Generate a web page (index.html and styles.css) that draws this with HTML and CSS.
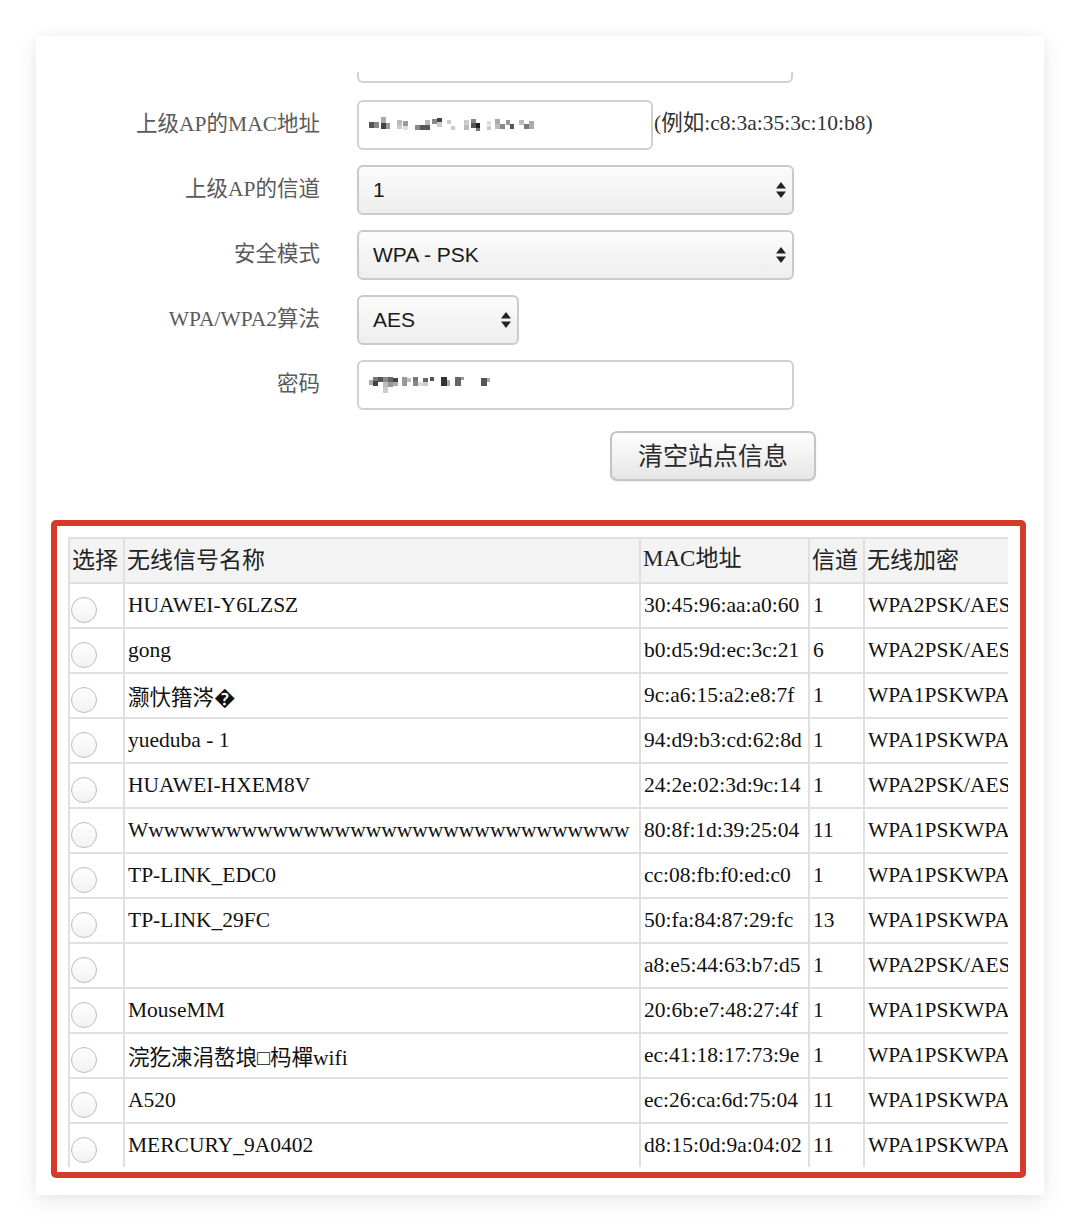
FILE: index.html
```html
<!DOCTYPE html>
<html lang="zh-CN">
<head>
<meta charset="utf-8">
<title>无线中继设置</title>
<link rel="stylesheet" href="styles.css">
</head>
<body>
<div class="card">
  <div class="viewport">
    <div class="prev-tail"></div>
    <div class="form">
      <div class="row">
        <label class="lbl">上级AP的MAC地址</label>
        <div class="field">
          <div class="input w-mac">
            <svg class="mosaic" width="176" height="16" viewBox="0 0 176 16">
              <rect x="0" y="5" width="5" height="6" fill="#555"/>
              <rect x="5" y="5" width="5" height="6" fill="#888"/>
              <rect x="12" y="0" width="5" height="6" fill="#aaa"/>
              <rect x="12" y="6" width="5" height="6" fill="#444"/>
              <rect x="17" y="6" width="4" height="6" fill="#999"/>
              <rect x="28" y="3" width="5" height="5" fill="#bbb"/>
              <rect x="28" y="8" width="5" height="4" fill="#ccc"/>
              <rect x="34" y="4" width="5" height="5" fill="#999"/>
              <rect x="34" y="9" width="5" height="4" fill="#ddd"/>
              <rect x="46" y="8" width="5" height="5" fill="#888"/>
              <rect x="51" y="8" width="5" height="5" fill="#555"/>
              <rect x="56" y="3" width="5" height="5" fill="#bbb"/>
              <rect x="56" y="8" width="5" height="5" fill="#555"/>
              <rect x="63" y="2" width="5" height="5" fill="#888"/>
              <rect x="68" y="1" width="5" height="4" fill="#444"/>
              <rect x="68" y="5" width="5" height="5" fill="#ccc"/>
              <rect x="78" y="3" width="4" height="4" fill="#ccc"/>
              <rect x="82" y="9" width="4" height="4" fill="#ccc"/>
              <rect x="95" y="3" width="5" height="5" fill="#ccc"/>
              <rect x="95" y="8" width="5" height="5" fill="#bbb"/>
              <rect x="102" y="2" width="5" height="4" fill="#888"/>
              <rect x="102" y="6" width="5" height="5" fill="#555"/>
              <rect x="107" y="6" width="4" height="5" fill="#222"/>
              <rect x="107" y="11" width="4" height="3" fill="#777"/>
              <rect x="118" y="4" width="4" height="4" fill="#ddd"/>
              <rect x="118" y="9" width="4" height="4" fill="#ccc"/>
              <rect x="126" y="2" width="5" height="5" fill="#aaa"/>
              <rect x="126" y="7" width="5" height="5" fill="#bbb"/>
              <rect x="131" y="7" width="5" height="5" fill="#888"/>
              <rect x="137" y="3" width="4" height="5" fill="#999"/>
              <rect x="141" y="7" width="4" height="5" fill="#555"/>
              <rect x="150" y="3" width="5" height="5" fill="#bbb"/>
              <rect x="155" y="7" width="5" height="5" fill="#777"/>
              <rect x="160" y="4" width="5" height="8" fill="#aaa"/>
            </svg>
          </div>
          <span class="hint">(例如:c8:3a:35:3c:10:b8)</span>
        </div>
      </div>
      <div class="row">
        <label class="lbl">上级AP的信道</label>
        <div class="field">
          <div class="select w-wide"><span>1</span>
            <svg class="arrows" width="10" height="16" viewBox="0 0 10 16"><path d="M5 0 L10 6.5 L0 6.5 Z M0 9.5 L10 9.5 L5 16 Z" fill="#222"/></svg>
          </div>
        </div>
      </div>
      <div class="row">
        <label class="lbl">安全模式</label>
        <div class="field">
          <div class="select w-wide"><span>WPA - PSK</span>
            <svg class="arrows" width="10" height="16" viewBox="0 0 10 16"><path d="M5 0 L10 6.5 L0 6.5 Z M0 9.5 L10 9.5 L5 16 Z" fill="#222"/></svg>
          </div>
        </div>
      </div>
      <div class="row">
        <label class="lbl">WPA/WPA2算法</label>
        <div class="field">
          <div class="select w-small"><span>AES</span>
            <svg class="arrows" width="10" height="16" viewBox="0 0 10 16"><path d="M5 0 L10 6.5 L0 6.5 Z M0 9.5 L10 9.5 L5 16 Z" fill="#222"/></svg>
          </div>
        </div>
      </div>
      <div class="row">
        <label class="lbl">密码</label>
        <div class="field">
          <div class="input w-wide">
            <svg class="mosaic" width="130" height="22" viewBox="0 0 130 22">
              <rect x="0" y="6" width="4" height="5" fill="#aaa"/>
              <rect x="4" y="3" width="5" height="4" fill="#777"/>
              <rect x="4" y="7" width="5" height="5" fill="#444"/>
              <rect x="9" y="3" width="5" height="5" fill="#555"/>
              <rect x="14" y="3" width="5" height="5" fill="#888"/>
              <rect x="14" y="8" width="5" height="5" fill="#bbb"/>
              <rect x="14" y="13" width="5" height="6" fill="#ccc"/>
              <rect x="19" y="3" width="5" height="5" fill="#666"/>
              <rect x="19" y="8" width="5" height="5" fill="#999"/>
              <rect x="24" y="4" width="5" height="4" fill="#444"/>
              <rect x="24" y="8" width="5" height="4" fill="#aaa"/>
              <rect x="33" y="3" width="5" height="9" fill="#999"/>
              <rect x="38" y="4" width="4" height="4" fill="#bbb"/>
              <rect x="44" y="3" width="5" height="4" fill="#777"/>
              <rect x="44" y="7" width="5" height="5" fill="#888"/>
              <rect x="49" y="8" width="5" height="4" fill="#ddd"/>
              <rect x="54" y="4" width="5" height="4" fill="#666"/>
              <rect x="54" y="8" width="5" height="4" fill="#ccc"/>
              <rect x="61" y="3" width="4" height="4" fill="#555"/>
              <rect x="72" y="3" width="6" height="9" fill="#333"/>
              <rect x="78" y="6" width="3" height="6" fill="#aaa"/>
              <rect x="86" y="3" width="6" height="9" fill="#666"/>
              <rect x="92" y="3" width="3" height="3" fill="#999"/>
              <rect x="112" y="4" width="6" height="8" fill="#555"/>
              <rect x="118" y="4" width="3" height="4" fill="#aaa"/>
            </svg>
          </div>
        </div>
      </div>
    </div>
    <div class="actions">
      <button class="btn" type="button">清空站点信息</button>
    </div>
    <div class="scan-box">
      <div class="table-wrap">
        <table class="ap-table">
          <colgroup>
            <col class="c-sel"><col class="c-name"><col class="c-mac"><col class="c-ch"><col class="c-enc">
          </colgroup>
          <thead>
            <tr><th class="cjk">选择</th><th class="cjk">无线信号名称</th><th>MAC地址</th><th class="cjk">信道</th><th class="cjk">无线加密</th></tr>
          </thead>
          <tbody>
            <tr><td><span class="radio"></span></td><td>HUAWEI-Y6LZSZ</td><td>30:45:96:aa:a0:60</td><td>1</td><td>WPA2PSK/AES</td></tr>
            <tr><td><span class="radio"></span></td><td>gong</td><td>b0:d5:9d:ec:3c:21</td><td>6</td><td>WPA2PSK/AES</td></tr>
            <tr><td><span class="radio"></span></td><td>灏忕簎涔�</td><td>9c:a6:15:a2:e8:7f</td><td>1</td><td>WPA1PSKWPA2PSK/AES</td></tr>
            <tr><td><span class="radio"></span></td><td>yueduba - 1</td><td>94:d9:b3:cd:62:8d</td><td>1</td><td>WPA1PSKWPA2PSK/AES</td></tr>
            <tr><td><span class="radio"></span></td><td>HUAWEI-HXEM8V</td><td>24:2e:02:3d:9c:14</td><td>1</td><td>WPA2PSK/AES</td></tr>
            <tr><td><span class="radio"></span></td><td>Wwwwwwwwwwwwwwwwwwwwwwwwwwwwwwww</td><td>80:8f:1d:39:25:04</td><td>11</td><td>WPA1PSKWPA2PSK/AES</td></tr>
            <tr><td><span class="radio"></span></td><td>TP-LINK_EDC0</td><td>cc:08:fb:f0:ed:c0</td><td>1</td><td>WPA1PSKWPA2PSK/AES</td></tr>
            <tr><td><span class="radio"></span></td><td>TP-LINK_29FC</td><td>50:fa:84:87:29:fc</td><td>13</td><td>WPA1PSKWPA2PSK/AES</td></tr>
            <tr><td><span class="radio"></span></td><td></td><td>a8:e5:44:63:b7:d5</td><td>1</td><td>WPA2PSK/AES</td></tr>
            <tr><td><span class="radio"></span></td><td>MouseMM</td><td>20:6b:e7:48:27:4f</td><td>1</td><td>WPA1PSKWPA2PSK/AES</td></tr>
            <tr><td><span class="radio"></span></td><td>浣犵湅涓嶅埌□杩樿wifi</td><td>ec:41:18:17:73:9e</td><td>1</td><td>WPA1PSKWPA2PSK/AES</td></tr>
            <tr><td><span class="radio"></span></td><td>A520</td><td>ec:26:ca:6d:75:04</td><td>11</td><td>WPA1PSKWPA2PSK/AES</td></tr>
            <tr><td><span class="radio"></span></td><td>MERCURY_9A0402</td><td>d8:15:0d:9a:04:02</td><td>11</td><td>WPA1PSKWPA2PSK/AES</td></tr>
          </tbody>
        </table>
      </div>
    </div>
  </div>
</div>
</body>
</html>
```

FILE: styles.css
```css
html, body {
  margin: 0;
  padding: 0;
  background: #ffffff;
}

body {
  width: 1080px;
  height: 1232px;
  overflow: hidden;
  font-family: "Liberation Serif", "Noto Sans CJK SC", serif;
  color: #222;
}

.card {
  margin: 36px 0 0 36px;
  width: 1008px;
  height: 1159px;
  box-sizing: border-box;
  padding-top: 36px;
  background: #fff;
  box-shadow: 0 6px 22px rgba(0, 0, 0, 0.09), 0 0 10px rgba(0, 0, 0, 0.03);
}

.viewport {
  overflow: hidden;
}

.prev-tail {
  margin-left: 321px;
  width: 436px;
  height: 11px;
  box-sizing: border-box;
  border: 2px solid #d2d2d2;
  border-top: none;
  border-radius: 0 0 6px 6px;
}

.form {
  margin-top: 17px;
  display: flex;
  flex-direction: column;
  gap: 15px;
}

.row {
  display: grid;
  grid-template-columns: 284px auto;
  column-gap: 37px;
  align-items: center;
}

.lbl {
  text-align: right;
  font-size: 21.5px;
  line-height: 1;
  color: #5a5a5a;
  white-space: nowrap;
  margin-top: -1px;
}

.field {
  display: flex;
  align-items: center;
}

.input,
.select {
  height: 50px;
  box-sizing: border-box;
  border-radius: 6px;
  display: flex;
  align-items: center;
}

.input {
  border: 2px solid #d0d0d0;
  background: #fff;
  padding-left: 10px;
}

.select {
  border: 2px solid #cacaca;
  background: linear-gradient(#fbfbfb, #eeeeee);
  padding: 0 6px 0 14px;
  justify-content: space-between;
  font-family: "Liberation Sans", Arial, sans-serif;
  font-size: 21px;
  color: #1a1a1a;
}

.w-mac { width: 296px; }
.w-wide { width: 437px; }
.w-small { width: 162px; }

.mosaic {
  display: block;
}

.arrows {
  display: block;
}

.hint {
  margin: -3px 0 0 1px;
  font-size: 21.5px;
  line-height: 1;
  color: #333;
  white-space: nowrap;
}

.actions {
  margin-top: 21px;
  padding-left: 574px;
}

.btn {
  width: 206px;
  height: 50px;
  box-sizing: border-box;
  border: 2px solid #c4c4c4;
  border-radius: 7px;
  background: linear-gradient(#fefefe, #e6e6e6);
  font-family: "Noto Sans CJK SC", sans-serif;
  font-size: 25px;
  line-height: 1;
  color: #2a2a2a;
  padding: 0 0 3px;
  box-shadow: 0 1px 2px rgba(0, 0, 0, 0.08);
}

.scan-box {
  margin: 39px 0 0 15px;
  width: 975px;
  height: 658px;
  box-sizing: border-box;
  border: 6px solid #d43b2b;
  border-radius: 5px;
  padding: 11px 12px 5px 11px;
}

.table-wrap {
  width: 940px;
  height: 630px;
  overflow: hidden;
}

.ap-table {
  table-layout: fixed;
  width: 1100px;
  border-collapse: collapse;
  font-size: 21.5px;
  color: #111;
  border-left: 2px solid #e0e0e0;
}

.c-sel { width: 55px; }
.c-name { width: 516px; }
.c-mac { width: 169px; }
.c-ch { width: 55px; }
.c-enc { width: 305px; }

.ap-table th,
.ap-table td {
  border: 2px solid #e0e0e0;
  height: 45px;
  box-sizing: border-box;
  padding: 0 3px;
  text-align: left;
  white-space: nowrap;
  overflow: hidden;
  vertical-align: middle;
}

.ap-table th {
  background: #f3f3f3;
  font-weight: normal;
  font-size: 23px;
  line-height: 1;
  color: #222;
  padding: 0 2px 5px;
}

.ap-table th.cjk {
  font-family: "Noto Sans CJK SC", sans-serif;
}

.ap-table td:first-child {
  padding: 0;
}

.radio {
  display: block;
  width: 26px;
  height: 26px;
  box-sizing: border-box;
  margin: 8px 0 0 1px;
  border: 1.5px solid #bdbdbd;
  border-radius: 50%;
  background: linear-gradient(#ffffff, #f2f2f2);
}
```
